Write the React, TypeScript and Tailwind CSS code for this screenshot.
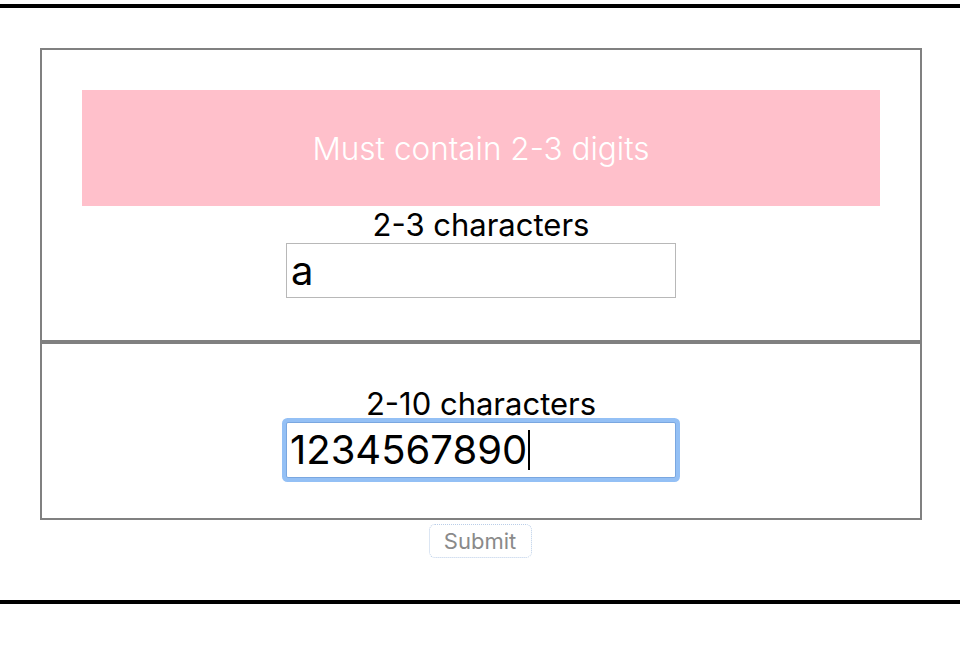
const font = { fontFamily: '"Inter", "Liberation Sans", sans-serif' };

function Field({ label, value, focused }: { label: string; value: string; focused?: boolean }) {
    return (
        <div className="flex flex-col items-center">
            <div className="h-[37px] leading-[37px] text-[31px] text-black">{label}</div>
            <div
                className={
                    focused
                        ? "w-[390px] h-[56px] border border-[#7aa7e0] rounded-[2px] shadow-[0_0_0_4px_#94c0f5] flex items-center pl-[3px] text-[40px] text-black bg-white"
                        : "w-[390px] h-[55px] border border-[#b8b8b8] flex items-center pl-[4px] text-[40px] text-black bg-white"
                }
            >
                <span>{value}</span>
                {focused && <span className="inline-block w-[2px] h-[40px] bg-black ml-[1px]" />}
            </div>
        </div>
    );
}

export default function App() {
    return (
        <div className="w-[960px] h-[648px] bg-white" style={font}>
            <div className="h-[4px]" />
            <div className="h-[4px] bg-black" />
            <div className="h-[40px]" />
            <div className="ml-[40px] w-[882px] flex flex-col">
                <div className="h-[294px] border-2 border-[#808080] px-[40px] pt-[40px] flex flex-col">
                    <div className="h-[116px] bg-[#ffc0cb] flex items-center justify-center text-white text-[31.5px] font-light pt-[2px]">
                        Must contain 2-3 digits
                    </div>
                    <Field label="2-3 characters" value="a" />
                </div>
                <div className="h-[178px] border-2 border-t-[2px] border-[#808080] pt-[41px] flex flex-col">
                    <Field label="2-10 characters" value="1234567890" focused />
                </div>
            </div>
            <div className="flex justify-center mt-[4px]">
                <button className="w-[103px] h-[34px] border border-dotted border-[#b9cde8] rounded-[6px] text-[22px] text-[#8a8a8a] bg-white">
                    Submit
                </button>
            </div>
            <div className="h-[42px]" />
            <div className="h-[4px] bg-black" />
        </div>
    );
}
